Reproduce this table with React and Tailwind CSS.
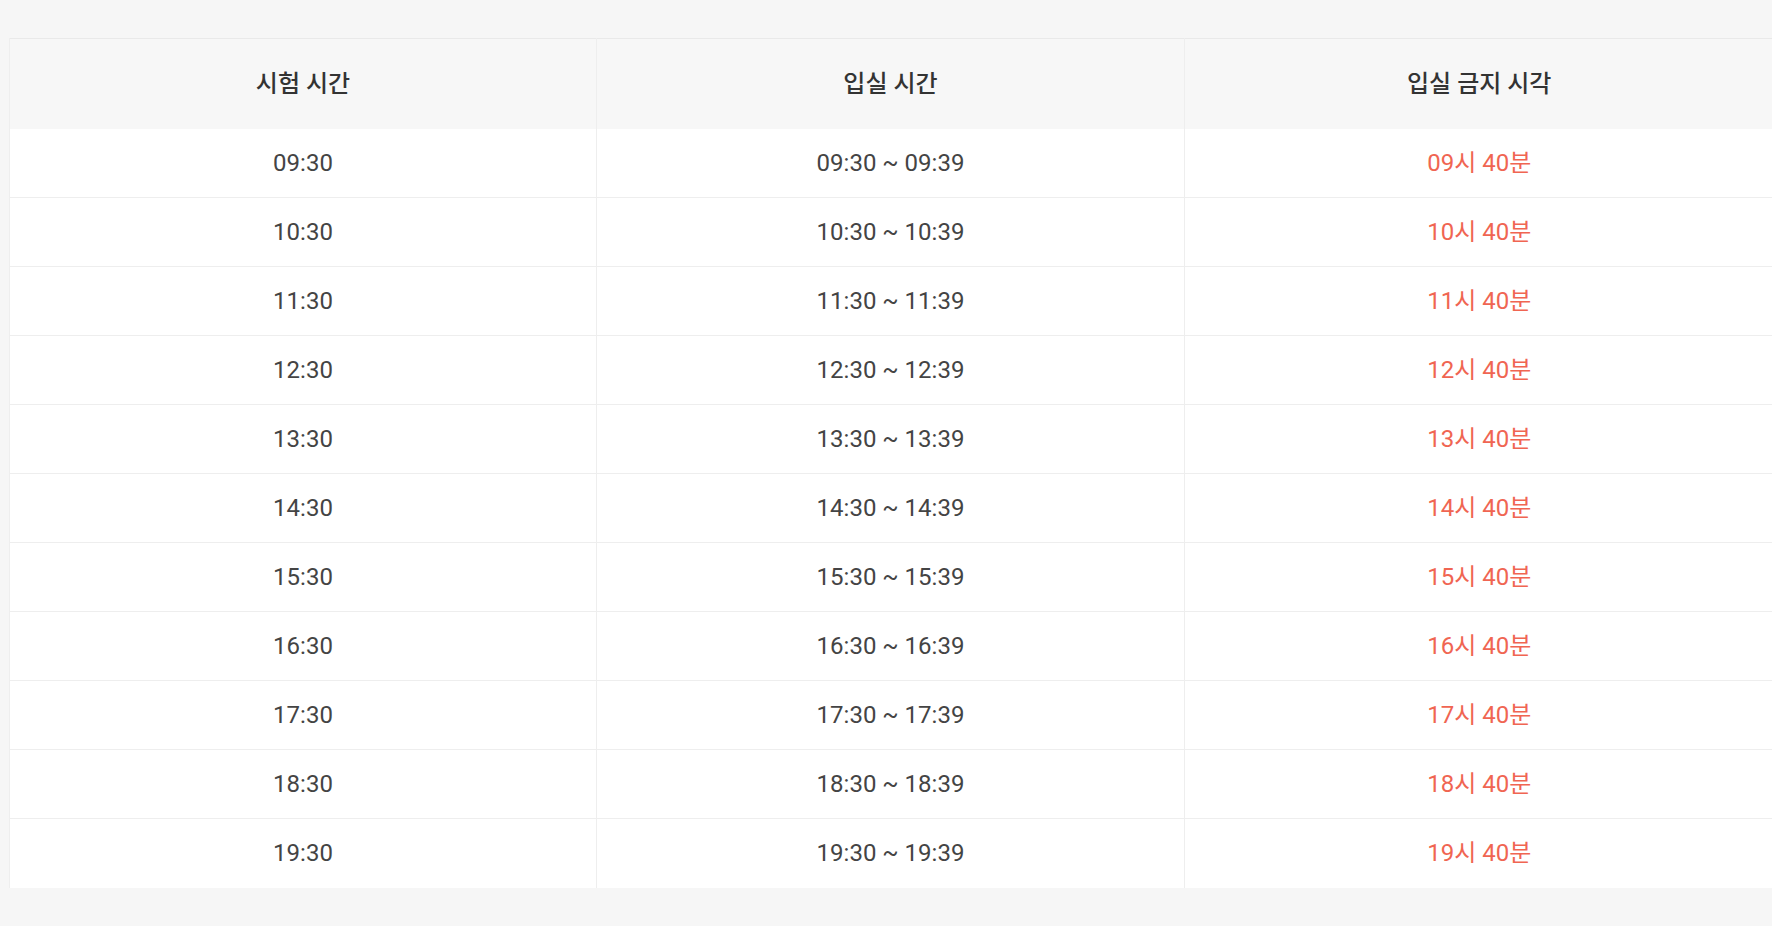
const rows = ['09', '10', '11', '12', '13', '14', '15', '16', '17', '18', '19']

export default function App() {
  return (
    <div className="min-h-[926px] w-full overflow-hidden bg-[#f6f6f6] pt-[38px] pl-[9px] font-['Roboto','Noto_Sans_CJK_KR',sans-serif]">
      <table className="w-[1764px] table-fixed border-collapse bg-white text-[24px] text-[#444]">
        <colgroup>
          <col className="w-[587px]" />
          <col className="w-[588px]" />
          <col className="w-[589px]" />
        </colgroup>
        <thead>
          <tr className="h-[90px] border-t border-[#e9e9e9] bg-[#f7f7f7]">
            <th className="border-l border-r border-[#eeeeee] font-medium text-[#333]">시험 시간</th>
            <th className="border-r border-[#eeeeee] font-medium text-[#333]">입실 시간</th>
            <th className="font-medium text-[#333]">입실 금지 시각</th>
          </tr>
        </thead>
        <tbody>
          {rows.map((h, i) => (
            <tr key={h} className={`h-[69px] ${i < rows.length - 1 ? 'border-b border-[#eeeeee]' : ''}`}>
              <td className="border-l border-r border-[#eeeeee] text-center">{h}:30</td>
              <td className="border-r border-[#eeeeee] text-center">{h}:30 ~ {h}:39</td>
              <td className="text-center text-[#f06552]">{h}시 40분</td>
            </tr>
          ))}
        </tbody>
      </table>
    </div>
  )
}
